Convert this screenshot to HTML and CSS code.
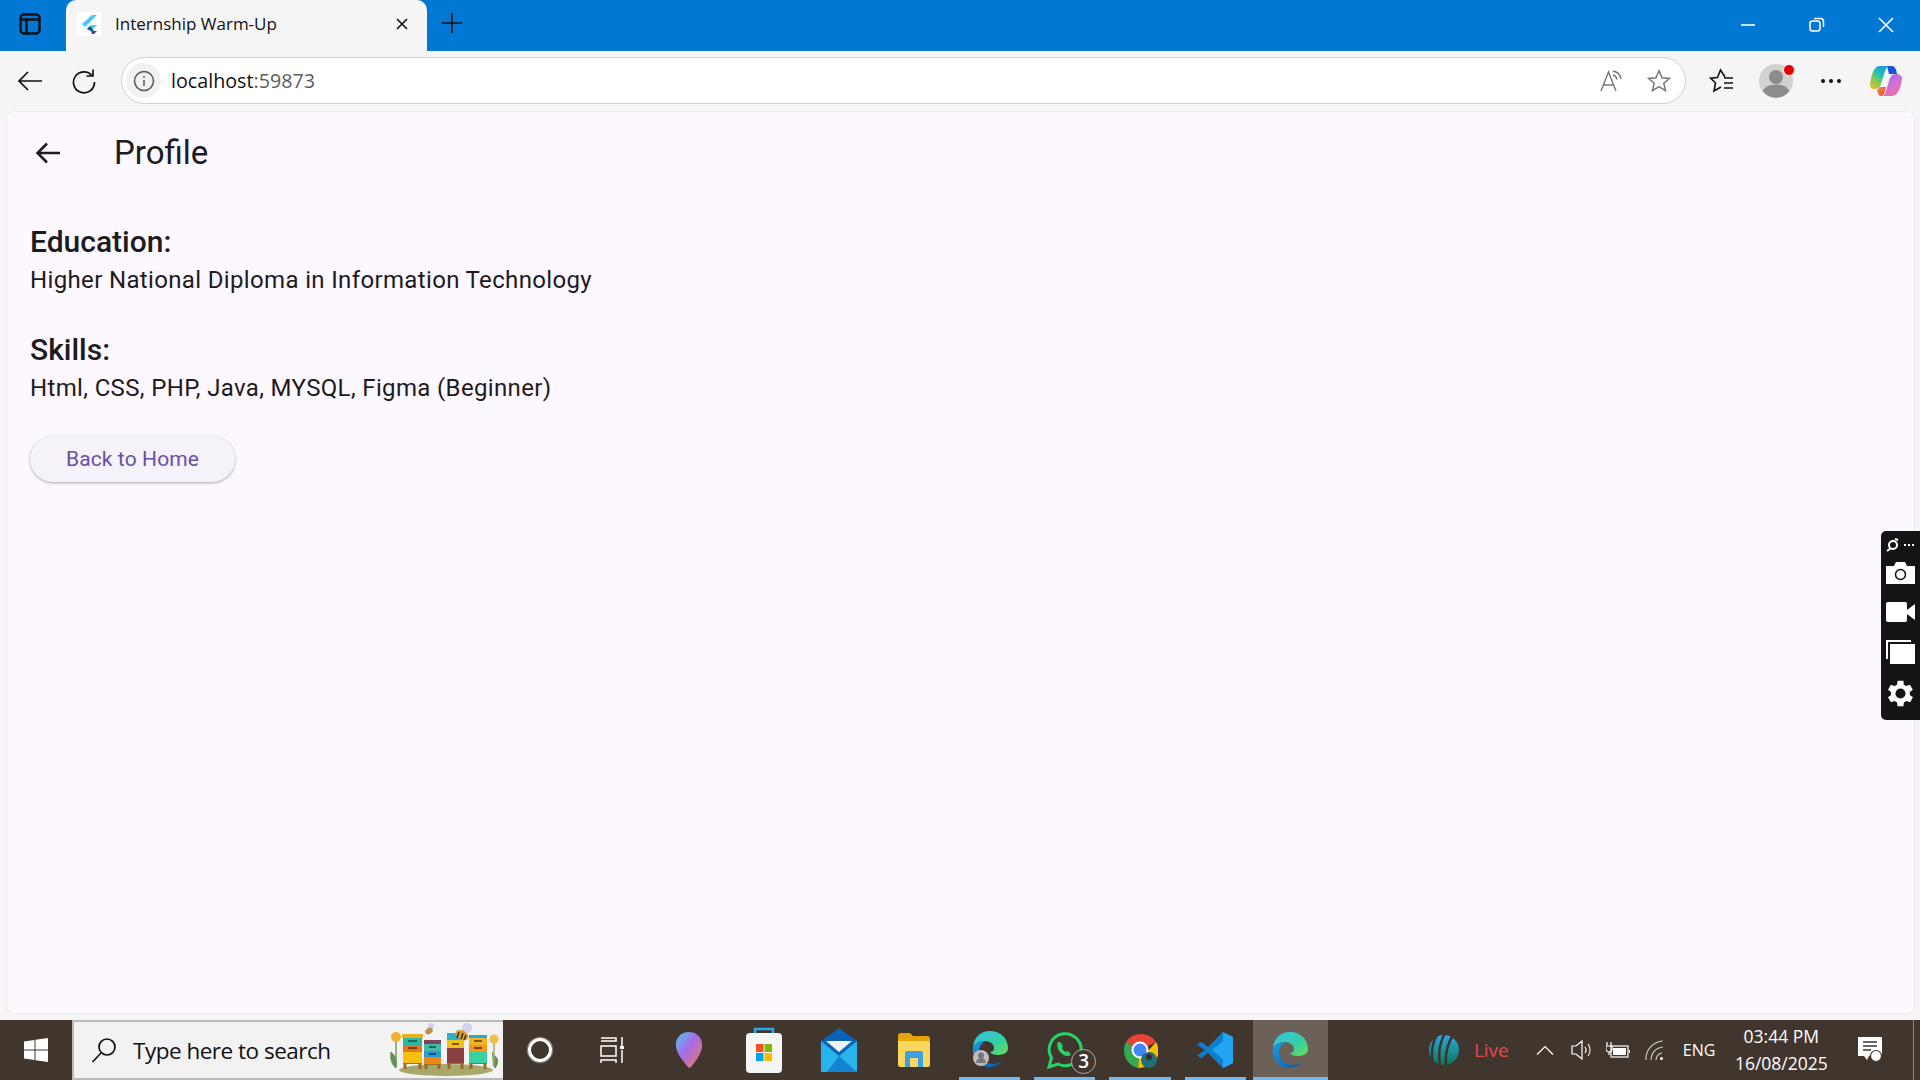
FILE: index.html
```html
<!DOCTYPE html>
<html lang="en">

<head>
    <meta charset="UTF-8">
    <title>Internship Warm-Up</title>
    <link rel="stylesheet" href="styles.css">
</head>

<body>
    <div class="titlebar">
        <div class="tab-actions">
            <svg width="22" height="22" viewBox="0 0 22 22" fill="none" stroke="#111" stroke-width="2.400"><rect x="1.500" y="1.500" width="19" height="19" rx="3.500"/><path d="M1.500 6.500h19M7.500 6.500v14" /></svg>
        </div>
        <div class="tab">
            <div class="tab-icon">
                <svg width="24" height="24" viewBox="0 0 24 24"><rect width="24" height="24" fill="#fff"/><path d="M5 12 15 3h5L8 15z" fill="#47c5fb"/><path d="M10 17l4-4h6l-6 6z" fill="#47c5fb"/><path d="M10 17l3-3 4 5h-3z" fill="#00569e"/><path d="M14 19h6l-3 3h-2z" fill="#1a237e" opacity=".85"/></svg>
            </div>
            <span class="tab-title">Internship Warm-Up</span>
            <svg class="tab-close" width="14" height="14" viewBox="0 0 14 14" stroke="#111" stroke-width="1.600"><path d="M2 2l10 10M12 2 2 12"/></svg>
        </div>
        <svg class="new-tab" width="22" height="22" viewBox="0 0 22 22" stroke="#111" stroke-width="1.600"><path d="M11 1v20M1 11h20"/></svg>
        <div class="window-buttons">
            <svg width="16" height="16" viewBox="0 0 16 16" stroke="#fff" stroke-width="1.600"><path d="M1 8h14"/></svg>
            <svg width="16" height="16" viewBox="0 0 16 16" fill="none" stroke="#fff" stroke-width="1.500"><rect x="1" y="4" width="10" height="10" rx="2.500"/><path d="M5 1.500h6.500A3 3 0 0 1 14.500 4.500V10"/></svg>
            <svg width="16" height="16" viewBox="0 0 16 16" stroke="#fff" stroke-width="1.600"><path d="M1 1l14 14M15 1 1 15"/></svg>
        </div>
    </div>

    <div class="toolbar">
        <button class="nav-btn">
            <svg width="26" height="24" viewBox="0 0 26 24" fill="none" stroke="#111" stroke-width="1.700"><path d="M25 12H2M11 3l-9 9 9 9"/></svg>
        </button>
        <button class="nav-btn">
            <svg width="26" height="26" viewBox="0 0 26 26" fill="none" stroke="#111" stroke-width="1.700"><path d="M21 7.500A10.500 10.500 0 1 0 23.500 14"/><path d="M22 1.500V8h-6.500"/></svg>
        </button>
        <div class="address-bar">
            <div class="site-info">
                <svg width="22" height="22" viewBox="0 0 22 22" fill="none" stroke="#555" stroke-width="1.500"><circle cx="11" cy="11" r="9.500"/><path d="M11 10v6M11 6v1.800"/></svg>
            </div>
            <span class="url">localhost<span class="url-port">:59873</span></span>
            <div class="address-icons">
                <svg width="26" height="24" viewBox="0 0 26 24" fill="none" stroke="#777" stroke-width="1.400"><path d="M2 22 9.500 3 17 22M4.500 16h10"/><path d="M14 2a10 10 0 0 1 8 8M14 6a6 6 0 0 1 4 4.500"/></svg>
                <svg width="24" height="24" viewBox="0 0 24 24" fill="none" stroke="#777" stroke-width="1.500"><path d="m12 1.800 3 6.900 7.500.7-5.700 4.900 1.700 7.300-6.500-3.900-6.500 3.900 1.700-7.300L1.500 9.400 9 8.700z"/></svg>
            </div>
        </div>
        <div class="toolbar-icons">
            <svg class="tool-fav" width="26" height="26" viewBox="0 0 26 26" fill="none" stroke="#111" stroke-width="1.600"><path d="M16 9 11.500 2 8.500 9.500 1.500 10.200l5 4.800L5 23l7-4"/><path d="M15 10h9M15 15h9M15 20h9"/></svg>
            <div class="avatar">
                <svg width="34" height="34" viewBox="0 0 34 34"><circle cx="17" cy="17" r="17" fill="#d3d1cf"/><circle cx="17" cy="13" r="7" fill="#8f8b88"/><path d="M3.500 27a14 9 0 0 1 27 0 17 17 0 0 1-27 0z" fill="#8f8b88"/></svg>
                <span class="avatar-dot"></span>
            </div>
            <div class="more-dots"><span></span><span></span><span></span></div>
            <svg class="copilot" width="32" height="32" viewBox="0 0 32 32">
                <defs>
                    <linearGradient id="cpA" x1="0" y1="1" x2=".7" y2="0"><stop offset="0" stop-color="#f9b92a"/><stop offset=".35" stop-color="#8ccb4a"/><stop offset=".65" stop-color="#26c0b0"/><stop offset="1" stop-color="#1c96ee"/></linearGradient>
                    <linearGradient id="cpB" x1=".2" y1="0" x2=".8" y2="1"><stop offset="0" stop-color="#9c6cf0"/><stop offset=".5" stop-color="#d070d8"/><stop offset="1" stop-color="#f4709a"/></linearGradient>
                    <linearGradient id="cpC" x1="0" y1="0" x2="1" y2="1"><stop offset="0" stop-color="#f8903a"/><stop offset="1" stop-color="#e8404e"/></linearGradient>
                </defs>
                <path d="M17 1h5c3 0 4 3 5 8h-8z" fill="#1a56d6"/>
                <path d="M9 1h11c-3 0-4 2-5 5l-4 13c-1 3-3 5-6 5H4c-3 0-4-2-4-5C1 11 4 1 9 1z" fill="url(#cpA)"/>
                <path d="M10 22h6l-1 4c-1 3-2 5-4 5 -2 0-3-2-4-6z" fill="url(#cpC)"/>
                <path d="M26 9c4 0 6 2 6 5 -1 8-4 17-10 17H11c3 0 4-2 5-5l4-13c1-3 3-4 6-4z" fill="url(#cpB)"/>
            </svg>
        </div>
    </div>

    <main class="page">
        <header class="app-bar">
            <svg width="28" height="24" viewBox="0 0 28 24" fill="none" stroke="#1d1b20" stroke-width="2.500"><path d="M26 12H3M13 2.500 3.500 12l9.500 9.500"/></svg>
            <h1 class="app-title">Profile</h1>
        </header>
        <section class="profile">
            <h2 class="section-title">Education:</h2>
            <p class="section-text">Higher National Diploma in Information Technology</p>
            <h2 class="section-title skills">Skills:</h2>
            <p class="section-text">Html, CSS, PHP, Java, MYSQL, Figma (Beginner)</p>
            <button class="home-btn">Back to Home</button>
        </section>
    </main>

    <div class="capture-bar">
        <svg class="capture-logo" width="28" height="14" viewBox="0 0 28 14" fill="none" stroke="#fff" stroke-width="2"><circle cx="7" cy="7" r="4"/><path d="M1 13l4-3M9 1l3 1"/><path d="M18 7h2M22 7h2M26 7h2" stroke-width="2"/></svg>
        <svg width="29" height="22" viewBox="0 0 29 22"><path d="M0 4h8l2-4h9l2 4h8v18H0z" fill="#fff"/><circle cx="14.500" cy="12.500" r="5" fill="#fff" stroke="#111" stroke-width="1.500"/></svg>
        <svg width="29" height="20" viewBox="0 0 29 20" fill="#fff"><rect width="21" height="20" rx="2"/><path d="M21 8l8-6v16l-8-6z"/></svg>
        <svg width="29" height="24" viewBox="0 0 29 24" fill="#fff"><path d="M0 0h25v2H2v17H0z"/><rect x="4" y="4" width="25" height="20"/></svg>
        <svg class="capture-gear" width="29" height="29" viewBox="3 2 20 20" fill="#fff"><path d="M19.400 13a7.500 7.500 0 0 0 0-2l2.100-1.600-2-3.500-2.500 1a7.500 7.500 0 0 0-1.700-1L15 3.200h-4l-.4 2.700a7.500 7.500 0 0 0-1.700 1l-2.500-1-2 3.500L6.500 11a7.500 7.500 0 0 0 0 2l-2.100 1.600 2 3.500 2.500-1a7.500 7.500 0 0 0 1.700 1l.4 2.700h4l.4-2.700a7.500 7.500 0 0 0 1.700-1l2.500 1 2-3.500zM13 15.500a3.500 3.500 0 1 1 0-7 3.500 3.500 0 0 1 0 7z"/></svg>
    </div>

    <footer class="taskbar">
        <div class="start">
            <svg width="24" height="24" viewBox="0 0 24 24" fill="#fff"><path d="M0 3.500 10.500 2v9.500H0zM11.500 1.800 24 0v11.500H11.500zM0 12.500h10.500V22L0 20.500zM11.500 12.500H24V24l-12.500-1.800z"/></svg>
        </div>
        <div class="search-box">
            <svg width="26" height="26" viewBox="0 0 26 26" fill="none" stroke="#111" stroke-width="1.700"><circle cx="16" cy="10" r="8"/><path d="M10 16 1.500 25"/></svg>
            <span class="search-text">Type here to search</span>
            <svg class="hives" width="112" height="56" viewBox="0 0 112 56">
                <ellipse cx="57" cy="48" rx="47" ry="6" fill="#a9a86c"/>
                <path d="M7 18v26" stroke="#7a9a50" stroke-width="1.500"/><path d="M2 30c5 4 6 10 5 16-4-3-6-9-5-16zM103 30c3 3 3 8 1 14M106 34c4 3 3 8 0 12-2-4-2-8 0-12z" fill="#5f8f5a" stroke="#5f8f5a"/>
                <circle cx="7" cy="15" r="5" fill="#f0b030"/>
                <path d="M105 21v22" stroke="#a8a860" stroke-width="1.500"/><circle cx="105" cy="17" r="4.500" fill="#eec04a"/>
                <path d="M16 41v6M31 41v6M37 42v5M50 42v5M60 41v6M73 41v6M82 41v6M96 41v6" stroke="#9a6a28" stroke-width="3"/>
                <path d="M14 41h19M35 42h17M58 41h17M80 41h18" stroke="#a06c28" stroke-width="2"/>
                <rect x="13" y="12" width="21" height="4" fill="#e6b020"/><rect x="14" y="16" width="19" height="7" fill="#2fb8a0"/><rect x="14" y="23" width="19" height="7" fill="#e07a18"/><rect x="14" y="30" width="19" height="11" fill="#f5c10e"/>
                <rect x="19" y="18" width="9" height="2" fill="#1d6a62"/><rect x="19" y="25" width="9" height="2" fill="#7a4010"/>
                <rect x="35" y="18" width="17" height="4" fill="#7c4656"/><rect x="35" y="22" width="17" height="7" fill="#45b8a8"/><rect x="35" y="29" width="17" height="6" fill="#2a9ad0"/><rect x="35" y="35" width="17" height="7" fill="#ee8612"/>
                <rect x="40" y="24" width="7" height="2" fill="#1d6a62"/><rect x="40" y="31" width="7" height="2" fill="#14507a"/>
                <rect x="58" y="11" width="17" height="7" fill="#2fb0c8"/><rect x="58" y="18" width="17" height="8" fill="#f0c020"/><rect x="58" y="26" width="17" height="15" fill="#8a4040"/>
                <rect x="63" y="21" width="7" height="2" fill="#7a5a10"/>
                <rect x="80" y="13" width="18" height="3" fill="#28a8d0"/><rect x="80" y="16" width="18" height="7" fill="#f0b428"/><rect x="80" y="23" width="18" height="7" fill="#f09a18"/><rect x="80" y="30" width="18" height="11" fill="#3ad0a0"/>
                <rect x="85" y="18" width="8" height="2" fill="#7a5a10"/><rect x="85" y="25" width="8" height="2" fill="#7a4010"/>
                <ellipse cx="78" cy="6" rx="5" ry="5" fill="#d5d0ee"/>
                <ellipse cx="73" cy="13" rx="7" ry="4.500" fill="#d9a02a" transform="rotate(30 73 13)"/><path d="M70 10l-2 6M74 11l-2 6M77 13l-2 5" stroke="#3a2a18" stroke-width="1.500"/>
                <ellipse cx="42" cy="4" rx="3" ry="3" fill="#d5d0ee"/><ellipse cx="40" cy="9" rx="4" ry="3" fill="#bb9050" transform="rotate(-35 40 9)"/>
            </svg>
        </div>
        <div class="task-slot cortana"><span class="cortana-ring"></span></div>
        <div class="task-slot task-view">
            <svg width="24" height="28" viewBox="0 0 24 28" fill="none" stroke="#fff" stroke-width="1.500"><path d="M1 2h15v3H1M1 10h15v10H1zM1 27v-3h15v3M22 1v9M22 14v13"/><rect x="20" y="10" width="4" height="3" fill="#fff" stroke="none"/></svg>
        </div>
        <div class="task-slot">
            <svg width="28" height="36" viewBox="0 0 28 36"><defs><linearGradient id="pa" x1="0" y1="0" x2="1" y2="1"><stop offset="0" stop-color="#4fc8ea"/><stop offset=".45" stop-color="#a66be8"/><stop offset="1" stop-color="#f07a5a"/></linearGradient></defs><path d="M14 0c8 0 14 6 13 15-1 7-6 14-11 20-1 1-3 1-3 0C8 29 2 22 1 15 0 6 6 0 14 0z" fill="url(#pa)"/></svg>
        </div>
        <div class="task-slot">
            <svg width="36" height="46" viewBox="0 0 36 46"><path d="M9 8V2h18v6" fill="none" stroke="#27a8e8" stroke-width="2.500"/><rect y="6" width="36" height="40" rx="4" fill="#f5f5f5"/><rect x="10" y="17" width="7.500" height="8" fill="#f25022"/><rect x="18.500" y="17" width="7.500" height="8" fill="#7fba00"/><rect x="10" y="26" width="7.500" height="8" fill="#00a4ef"/><rect x="18.500" y="26" width="7.500" height="8" fill="#ffb900"/></svg>
        </div>
        <div class="task-slot">
            <svg width="36" height="44" viewBox="0 0 36 44"><path d="M18 0 36 13v31H0V13z" fill="#0a63b8"/><path d="M5 13h26l-13 11z" fill="#f2f2f2"/><path d="M0 13l18 15 18-15v31H0z" fill="#27b4ea"/><path d="M36 44H6l12-16z" fill="#1282d2"/></svg>
        </div>
        <div class="task-slot">
            <svg width="32" height="34" viewBox="0 0 32 34"><path d="M0 3a3 3 0 0 1 3-3h9l3 3h14a3 3 0 0 1 3 3v25a3 3 0 0 1-3 3H3a3 3 0 0 1-3-3z" fill="#e4a70a"/><path d="M0 8h29a3 3 0 0 1 3 3v20a3 3 0 0 1-3 3H3a3 3 0 0 1-3-3z" fill="#fbd75f"/><path d="M7 34V20a2 2 0 0 1 2-2h14a2 2 0 0 1 2 2v14h-5v-9h-8v9z" fill="#3f9fe0"/></svg>
        </div>
        <div class="task-slot active-dim">
            <svg width="36" height="38" viewBox="0 0 36 38"><use href="#edgeIcon" width="36" height="36"/><circle cx="9" cy="27" r="8" fill="#bdbdbd"/><circle cx="9" cy="24.500" r="3" fill="#777"/><path d="M4 32a5 5 0 0 1 10 0z" fill="#777"/></svg>
        </div>
        <div class="task-slot active-dim">
            <svg width="36" height="38" viewBox="0 0 36 38" fill="none"><path d="M2 36l2.500-9A16 16 0 1 1 11 33z" stroke="#25d366" stroke-width="3"/><path d="M11 11c-2 3 0 8 3 11s7 4 10 2l-3-4-2 1c-2-1-3-2-4-4l1-2-3-4z" fill="#25d366"/></svg>
            <span class="badge">3</span>
        </div>
        <div class="task-slot active-dim">
            <svg width="36" height="36" viewBox="0 0 36 36"><path d="M18 18 4 10A18 18 0 0 1 34 10z" fill="#ea4335"/><path d="M18 18 4 10a18 18 0 0 0 12 26z" fill="#34a853"/><path d="M18 18h16a18 18 0 0 1-18 18z" fill="#fbbc05"/><path d="M34 10a18 18 0 0 1 0 18H18z" fill="#fbbc05"/><circle cx="18" cy="18" r="8.500" fill="#fff"/><circle cx="18" cy="18" r="6.500" fill="#4285f4"/><circle cx="27" cy="28" r="8" fill="#1f6f78"/><circle cx="27" cy="25" r="3" fill="#3b2a2a"/></svg>
        </div>
        <div class="task-slot active-dim">
            <svg width="36" height="36" viewBox="0 0 36 36"><path d="M26 0 36 5v26l-10 5L11 21l-6.500 5L0 23.500 8 18 0 12.500 4.500 10 11 15z" fill="#0f7fcb"/><path d="M26 0 36 5v26l-10 5zM26 9 15 18l11 9z" fill="#22a4f0" fill-rule="evenodd"/></svg>
        </div>
        <div class="task-slot active">
            <svg width="36" height="36" viewBox="0 0 36 36">
                <defs>
                    <linearGradient id="ed1" x1="0" y1="0" x2="1" y2="1"><stop offset="0" stop-color="#35c1f1"/><stop offset=".6" stop-color="#34d0a0"/><stop offset="1" stop-color="#6fdc5a"/></linearGradient>
                    <linearGradient id="ed2" x1="0" y1="0" x2="1" y2="1"><stop offset="0" stop-color="#1b9de2"/><stop offset="1" stop-color="#0c59a4"/></linearGradient>
                    <symbol id="edgeIcon" viewBox="0 0 36 36">
                        <path d="M1 16C2 6 9 0 18 0c10 0 18 7 18 17 0 5-5 7-10 7-4 0-7-1-8-3 2 0 4-1 4-4 0-4-4-7-9-7-5 0-10 2-12 6z" fill="url(#ed1)"/>
                        <path d="M1 16c2-4 7-6 12-6-4 3-6 6-6 10 0 6 5 12 13 13 3 0 7-1 10-3-3 4-8 6-13 6C7 36 0 27 1 16z" fill="url(#ed2)"/>
                    </symbol>
                </defs>
                <use href="#edgeIcon" width="36" height="36"/>
            </svg>
        </div>
        <div class="tray">
            <svg class="tray-logo" width="32" height="34" viewBox="0 0 32 34"><defs><linearGradient id="icc" x1="0" y1="0" x2="0" y2="1"><stop offset="0" stop-color="#2aa6e0"/><stop offset="1" stop-color="#0b7a5a"/></linearGradient></defs><ellipse cx="16" cy="17" rx="15" ry="15" fill="url(#icc)"/><path d="M9 2C4 10 3 20 5 30M17 0c-5 9-7 21-5 33M25 2c-5 8-8 18-7 30" fill="none" stroke="#3f342c" stroke-width="2.500"/></svg>
            <span class="live">Live</span>
            <svg class="tray-chevron" width="18" height="10" viewBox="0 0 18 10" fill="none" stroke="#fff" stroke-width="1.200"><path d="M1 9.500 9 1.500l8 8"/></svg>
            <svg class="tray-sound" width="22" height="20" viewBox="0 0 22 20" fill="none" stroke="#fff" stroke-width="1.200"><path d="M1 6h4l6-5v18l-6-5H1zM14 7a5 5 0 0 1 0 6M17 4a10 10 0 0 1 0 12"/></svg>
            <svg class="tray-battery" width="24" height="18" viewBox="0 0 24 18" fill="none" stroke="#fff" stroke-width="1.200"><path d="M1 1v4M5 1v4M0 5h6v3a3 3 0 0 1-6 0zM3 11v3"/><rect x="5" y="5" width="17" height="11"/><rect x="7" y="7" width="13" height="7" fill="#fff" stroke="none"/><path d="M23.500 9v3"/></svg>
            <svg class="tray-wifi" width="18" height="20" viewBox="0 0 18 20" fill="none" stroke="#ccc" stroke-width="1.200"><path d="M1 20A18 18 0 0 1 18 1M6 20A13 13 0 0 1 18 7M11 20a7 7 0 0 1 6-7"/><circle cx="16.500" cy="18.500" r="1.500" fill="#fff" stroke="none"/></svg>
            <span class="tray-lang">ENG</span>
            <div class="clock"><span>03:44 PM</span><span>16/08/2025</span></div>
            <svg class="tray-notify" width="26" height="26" viewBox="0 0 26 26"><path d="M0 0h24v19H13v-1l-2 1-2 4-3-4H0z" fill="#fff"/><path d="M5 5h14M5 9h14M5 13h8" stroke="#40362e" stroke-width="1.300"/><circle cx="18" cy="19" r="5.500" fill="#fff" stroke="#40362e" stroke-width="1.200"/></svg>
            <div class="show-desktop"></div>
        </div>
    </footer>
</body>

</html>
```

FILE: styles.css
```css
* {
    box-sizing: border-box;
}

html,
body {
    margin: 0;
    padding: 0;
    height: 1080px;
    overflow: hidden;
}

body {
    display: flex;
    flex-direction: column;
    background: #f5f5f5;
    font-family: "Open Sans", sans-serif;
    color: #111;
}

/* title bar */
.titlebar {
    height: 51px;
    flex: none;
    display: flex;
    align-items: flex-start;
    background: #0078d4;
}

.tab-actions {
    width: 66px;
    display: flex;
    justify-content: center;
    padding: 13px 6px 0 0;
}

.tab {
    width: 361px;
    height: 51px;
    display: flex;
    align-items: center;
    padding: 0 18px 3px 11px;
    background: #f5f5f5;
    border-radius: 10px 10px 0 0;
}

.tab-icon {
    width: 24px;
    height: 24px;
    margin-right: 15px;
}

.tab-title {
    flex: 1;
    font-size: 17px;
    white-space: nowrap;
    margin: -1px 0 0 -1px;
}

.new-tab {
    margin: 12px 0 0 14px;
}

.window-buttons {
    margin-left: auto;
    display: flex;
    gap: 53px;
    padding: 17px 26px 0 0;
}

/* address row */
.toolbar {
    height: 60px;
    flex: none;
    display: flex;
    align-items: center;
    padding-right: 10px;
    padding-bottom: 1px;
}

.nav-btn {
    width: 54px;
    height: 40px;
    padding: 0;
    border: none;
    background: none;
    display: flex;
    align-items: center;
    justify-content: center;
}

.nav-btn:first-child {
    margin-left: 3px;
}

.address-bar {
    width: 1565px;
    height: 47px;
    margin-left: 10px;
    display: flex;
    align-items: center;
    padding: 0 13px 0 4px;
    background: #fff;
    border: 1.5px solid #cfcfcf;
    border-radius: 24px;
}

.site-info {
    width: 35px;
    height: 35px;
    display: flex;
    align-items: center;
    justify-content: center;
    background: #f1f1f1;
    border-radius: 50%;
}

.url {
    margin-left: 10px;
    font-size: 19.700px;
    color: #111;
}

.url-port {
    color: #5d5d5d;
}

.address-icons {
    margin-left: auto;
    display: flex;
    gap: 22px;
    padding-right: 1px;
}

.toolbar-icons {
    flex: 1;
    display: flex;
    align-items: center;
    padding-left: 23px;
}

.avatar {
    position: relative;
    width: 34px;
    height: 34px;
    margin-left: 24px;
}

.avatar-dot {
    position: absolute;
    top: 0;
    right: -2px;
    width: 10px;
    height: 10px;
    background: #e60000;
    border: 1px solid #f5f5f5;
    box-sizing: content-box;
    border-radius: 50%;
}

.more-dots {
    margin-left: 28px;
    display: flex;
    gap: 4px;
}

.more-dots span {
    width: 4px;
    height: 4px;
    background: #111;
    border-radius: 50%;
}

.copilot {
    margin-left: 29px;
}

/* flutter page */
.page {
    flex: 1;
    margin: 0 5px 6px 6px;
    background: #fdf7ff;
    border: 1px solid #ececec;
    border-radius: 8px;
    color: #1d1b20;
    font-family: Roboto, sans-serif;
}

.app-bar {
    height: 81px;
    display: flex;
    align-items: center;
    padding-left: 27px;
}

.app-title {
    margin: 0 0 0 52px;
    font-size: 33px;
    font-weight: 400;
    line-height: 40px;
}

.profile {
    padding: 29px 0 0 23px;
}

.section-title {
    margin: 0;
    font-size: 30px;
    font-weight: 500;
    line-height: 40px;
}

.section-title.skills {
    margin-top: 32px;
}

.section-text {
    margin: 0;
    font-size: 24px;
    line-height: 36px;
    letter-spacing: .35px;
}

.home-btn {
    display: block;
    width: 205px;
    height: 46px;
    margin-top: 30px;
    padding: 0;
    border: none;
    border-radius: 23px;
    background: #f6f2fa;
    color: #6750a4;
    font-family: Roboto, sans-serif;
    font-size: 21px;
    letter-spacing: .12px;
    box-shadow: 0 1px 3px rgba(0, 0, 0, .32);
}

/* capture tool floating over the page */
.capture-bar {
    position: absolute;
    top: 531px;
    right: 0;
    width: 39px;
    height: 189px;
    padding: 7px 0 0 5px;
    display: flex;
    flex-direction: column;
    gap: 18px;
    align-items: flex-start;
    background: #141414;
    border-radius: 5px 0 0 5px;
}

.capture-logo {
    margin-bottom: -8px;
}

.capture-gear {
    margin-top: -3px;
}

/* windows taskbar */
.taskbar {
    height: 60px;
    flex: none;
    display: flex;
    align-items: center;
    background: #40362e;
}

.start {
    width: 72px;
    display: flex;
    justify-content: center;
}

.search-box {
    width: 431px;
    height: 60px;
    display: flex;
    align-items: center;
    padding-left: 17px;
    background: #f2f2f2;
    border: 2px solid #b9b9b9;
    border-right: none;
    overflow: hidden;
}

.search-text {
    margin-left: 16px;
    font-size: 22.500px;
    letter-spacing: -.5px;
    color: #111;
}

.hives {
    margin-left: auto;
    margin-right: 2px;
}

.task-slot {
    position: relative;
    width: 75.200px;
    height: 60px;
    flex: none;
    display: flex;
    align-items: center;
    justify-content: center;
}

.cortana {
    width: 73px;
}

.cortana-ring {
    width: 24px;
    height: 24px;
    border: 3px solid #fff;
    border-radius: 50%;
    box-shadow: 0 0 1px 1px rgba(255, 255, 255, .45);
}

.task-view svg {
    margin-right: 3px;
}

.active-dim::after,
.active::after {
    content: "";
    position: absolute;
    left: 7px;
    right: 7px;
    bottom: 0;
    height: 3px;
    background: #76b9ed;
}

.active {
    background: #6b6158;
}

.active::after {
    left: 0;
    right: 0;
}

.badge {
    position: absolute;
    left: 44px;
    top: 29px;
    width: 25px;
    height: 25px;
    border: 1px solid #aaa;
    border-radius: 50%;
    background: #40362e;
    color: #fff;
    font-size: 19px;
    font-weight: 600;
    line-height: 23px;
    text-align: center;
}

.tray {
    flex: 1;
    height: 60px;
    display: flex;
    align-items: center;
    color: #fff;
}

.tray-logo {
    margin-left: 100px;
}

.live {
    margin-left: 14px;
    color: #e5484d;
    font-size: 19px;
}

.tray-chevron {
    margin-left: 27px;
}

.tray-sound {
    margin-left: 17px;
}

.tray-battery {
    margin-left: 13px;
}

.tray-wifi {
    margin-left: 15px;
}

.tray-lang {
    margin-left: 20px;
    font-size: 16px;
}

.clock {
    margin-left: 19px;
    width: 94px;
    display: flex;
    flex-direction: column;
    align-items: center;
    gap: 4px;
    font-size: 17.500px;
    line-height: 23px;
}

.tray-notify {
    margin-left: 30px;
}

.show-desktop {
    width: 1px;
    height: 60px;
    margin-left: auto;
    margin-right: 6px;
    background: #8a8580;
}
```
